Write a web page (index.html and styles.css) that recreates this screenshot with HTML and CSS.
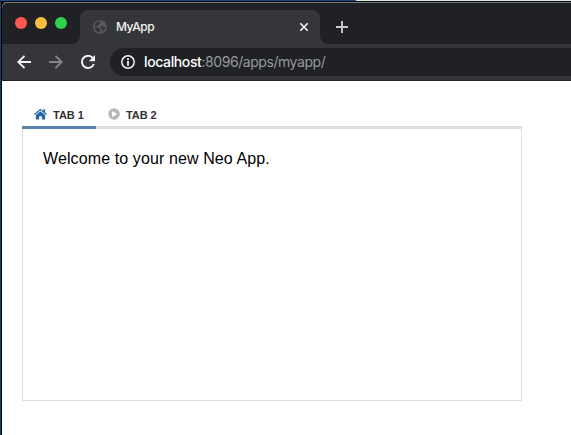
FILE: index.html
```html
<!DOCTYPE html>
<html lang="en">
<head>
<meta charset="utf-8">
<title>MyApp</title>
<link rel="stylesheet" href="styles.css">
</head>
<body>
<div class="desktop"><div class="desktop-light"></div></div>
<div class="window">
  <header class="tabstrip">
    <div class="lights"><i class="light red"></i><i class="light yellow"></i><i class="light green"></i></div>
    <div class="browser-tab">
      <svg class="globe" width="14" height="14" viewBox="0 0 14 14"><circle cx="7" cy="7" r="7" fill="#56585c"/><path d="M7.5 1.6c-.6 1.4 0 1.8-1.2 2.5-.9.5-.6 1.4-1.5 1.8L1.6 6a5.5 5.5 0 0 1 5.9-4.4zM1.6 7.3l3.2.1c1.2.2 1.3 1.5 2.7 1.6.4.8-.9 1.5-1 3.4a5.4 5.4 0 0 1-4.9-5.1zM12.4 7.6c-.5 2.2-1.8 3.8-3.4 4.4.2-1 .8-1.4.6-2.4-.3-1.1-1.8-1-2-2.1-.2-1 1-1.3 1.8-1 1 .4 2 .1 3 1.1z" fill="#35363a"/></svg>
      <span class="browser-title">MyApp</span>
      <svg class="close" width="10" height="10" viewBox="0 0 10 10"><path d="M1.3 1.3l7.4 7.4M8.7 1.3L1.3 8.7" stroke="#f1f3f4" stroke-width="1.6"/></svg>
    </div>
    <svg class="plus" width="12" height="12" viewBox="0 0 12 12"><path d="M6 0v12M0 6h12" stroke="#c8cacd" stroke-width="1.9"/></svg>
  </header>
  <nav class="toolbar">
    <svg width="14" height="14" viewBox="0 0 14 14" fill="none" stroke="#f1f3f4" stroke-width="1.9"><path d="M14 7H1.5M7.5.8L1.3 7l6.2 6.2"/></svg>
    <svg class="forward" width="14" height="14" viewBox="0 0 14 14" fill="none" stroke="#858689" stroke-width="1.9"><path d="M0 7h12.5M6.5.8L12.7 7l-6.2 6.2"/></svg>
    <svg class="reload" width="14" height="14" viewBox="0 0 14 14"><path d="M12 3.3A6.1 6.1 0 1 0 12.8 9" fill="none" stroke="#f1f3f4" stroke-width="1.9"/><path d="M14 0v6.2H7.8z" fill="#f1f3f4"/></svg>
    <div class="address">
      <svg width="14" height="14" viewBox="0 0 14 14"><circle cx="7" cy="7" r="6.2" fill="none" stroke="#f1f3f4" stroke-width="1.5"/><path d="M6.1 3.2h1.8v1.7H6.1zM6.1 6h1.8v4.8H6.1z" fill="#f1f3f4"/></svg>
      <span class="url"><b>localhost</b>:8096/apps/myapp/</span>
    </div>
  </nav>
  <main class="page">
    <div class="tabs">
      <div class="tab active">
        <svg width="13" height="12" viewBox="0 0 14 12" fill="#2467a8"><path d="M7 .3L14 6l-.8 1L7 2 .8 7 0 6z"/><path d="M10 .8h2v4l-2-1.6z"/><path d="M7 3l5 4.1V12H8.5V8.3h-3V12H2V7.1z"/></svg>
        <span class="label">TAB 1</span>
      </div>
      <div class="tab">
        <svg width="12" height="12" viewBox="0 0 12 12"><circle cx="6" cy="6" r="5.8" fill="#b8b8b8"/><path d="M4.1 2.9v6.2L9.3 6z" fill="#fff"/></svg>
        <span class="label">TAB 2</span>
      </div>
    </div>
    <section class="panel"><span class="welcome">Welcome to your new Neo App.</span></section>
  </main>
</div>
</body>
</html>
```
FILE: styles.css
```css
* { box-sizing: border-box; }
body {
  margin: 0;
  width: 571px;
  height: 435px;
  overflow: hidden;
  background: linear-gradient(90deg, #1d3c6b 1px, #000 1px);
  font-family: "Liberation Sans", Arial, sans-serif;
}
svg { display: block; flex: none; }
.desktop { height: 2px; background: #234a7c; border-bottom: 1px solid #050b12; }
.desktop-light { height: 1px; margin-left: 356px; background: #dfe5df; }
.window {
  margin-left: 2px;
  height: 433px;
  background: #fff;
  border-top-left-radius: 5px;
  overflow: hidden;
}
.tabstrip {
  display: flex;
  height: 42px;
  background: #202124;
  border-top: 1px solid #77787a;
  border-top-left-radius: 5px;
}
.lights { display: flex; gap: 8px; width: 78px; padding: 14px 0 0 13px; }
.light { width: 12px; height: 12px; border-radius: 50%; }
.red { background: #ff5850; }
.yellow { background: #ffbd3e; }
.green { background: #30d14b; }
.browser-tab {
  position: relative;
  display: flex;
  align-items: center;
  width: 240px;
  height: 34px;
  margin-top: 7px;
  padding: 0 11px 0 13px;
  background: #35363a;
  border-radius: 8px 8px 0 0;
}
.browser-tab::before, .browser-tab::after {
  content: "";
  position: absolute;
  bottom: 0;
  width: 8px;
  height: 8px;
}
.browser-tab::before { left: -8px; background: radial-gradient(circle at 0 0, #202124 7.5px, #35363a 8.2px); }
.browser-tab::after { right: -8px; background: radial-gradient(circle at 100% 0, #202124 7.5px, #35363a 8.2px); }
.browser-title { margin-left: 9px; color: #f1f3f4; font: 500 12px/16px Inter, sans-serif; letter-spacing: -0.45px; }
.close { margin-left: auto; }
.plus { margin: 18px 0 0 16px; }
.toolbar {
  display: flex;
  align-items: center;
  height: 37px;
  padding: 0 0 1px 15px;
  background: #35363a;
  border-bottom: 1px solid #242225;
}
.forward { margin-left: 18px; }
.reload { margin-left: 18px; }
.address {
  display: flex;
  align-items: center;
  flex: 1;
  height: 28px;
  margin-left: 15px;
  padding-left: 11px;
  background: #202124;
  border-radius: 14px 0 0 14px;
}
.url { margin-left: 9px; color: #96999d; font: 400 14px/20px Inter, sans-serif; letter-spacing: -0.44px; white-space: nowrap; }
.url b { color: #fff; font-weight: 500; letter-spacing: -0.38px; }
.page { width: 520px; padding: 21px 0 0 20px; }
.tabs { display: flex; height: 27px; border-bottom: 3px solid #ddd; }
.tab { display: flex; align-items: center; height: 27px; padding: 0 12px 3px; }
.active { width: 74px; border-bottom: 3px solid #5a80ae; padding-bottom: 0; }
.label { margin-left: 6px; padding-top: 2px; color: #333; font-size: 11px; font-weight: 700; line-height: 13px; white-space: nowrap; }
.tab:not(.active) .label { letter-spacing: -0.1px; }
.panel { height: 272px; padding: 20px 20px; border: 1px solid #ddd; border-top: 0; }
.welcome { display: block; font-size: 16px; line-height: 20px; letter-spacing: 0.11px; color: #000; white-space: nowrap; }
```
